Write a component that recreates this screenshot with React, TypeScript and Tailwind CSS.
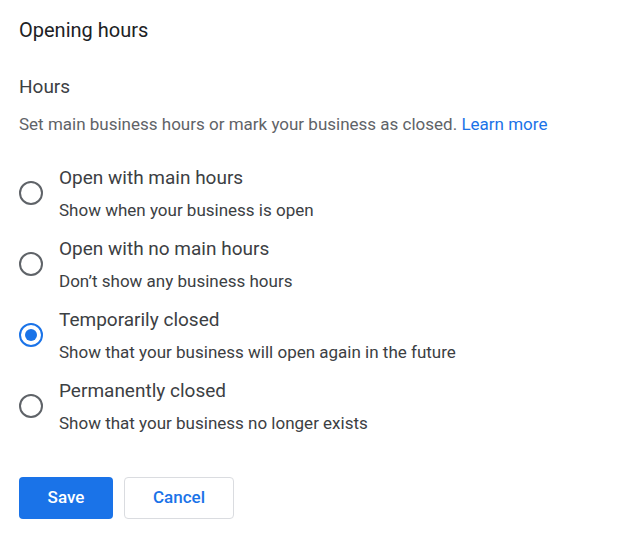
import { useState } from 'react'

const options = [
  { title: 'Open with main hours', desc: 'Show when your business is open' },
  { title: 'Open with no main hours', desc: 'Don\u2019t show any business hours' },
  { title: 'Temporarily closed', desc: 'Show that your business will open again in the future' },
  { title: 'Permanently closed', desc: 'Show that your business no longer exists' },
]

function Radio({ checked }: { checked: boolean }) {
  return (
    <span
      className={
        checked
          ? 'flex h-[24px] w-[24px] shrink-0 items-center justify-center rounded-full border-2 border-[#1a73e8]'
          : 'flex h-[24px] w-[24px] shrink-0 items-center justify-center rounded-full border-2 border-[#5f6368]'
      }
    >
      {checked && <span className="h-[12px] w-[12px] rounded-full bg-[#1a73e8]" />}
    </span>
  )
}

export default function App() {
  const [selected, setSelected] = useState(2)

  return (
    <div className="h-[543px] w-[640px] bg-white px-[19px] pt-[18px] font-['Roboto',sans-serif]">
      <h2 className="text-[20px] leading-[24px] text-[#202124]">Opening hours</h2>
      <h3 className="mt-[33px] text-[19px] leading-[24px] text-[#3c4043]">Hours</h3>
      <p className="mt-[13px] text-[17px] leading-[24px] text-[#5f6368]">
        Set main business hours or mark your business as closed.{' '}
        <a className="text-[#1a73e8]" href="#">
          Learn more
        </a>
      </p>

      <div className="mt-[30px] flex flex-col gap-[17px]">
        {options.map((o, i) => (
          <label
            key={o.title}
            className="flex cursor-pointer items-center gap-[16px]"
            onClick={() => setSelected(i)}
          >
            <Radio checked={selected === i} />
            <div>
              <div className="text-[19px] leading-[24px] text-[#3c4043]">{o.title}</div>
              <div className="mt-[10px] text-[17px] leading-[20px] text-[#3c4043]">{o.desc}</div>
            </div>
          </label>
        ))}
      </div>

      <div className="mt-[44px] flex gap-[11px]">
        <button className="h-[42px] w-[94px] rounded-[4px] bg-[#1a73e8] text-[17px] font-medium text-white">
          Save
        </button>
        <button className="h-[42px] w-[110px] rounded-[4px] border border-[#dadce0] bg-white text-[17px] font-medium text-[#1a73e8]">
          Cancel
        </button>
      </div>
    </div>
  )
}
